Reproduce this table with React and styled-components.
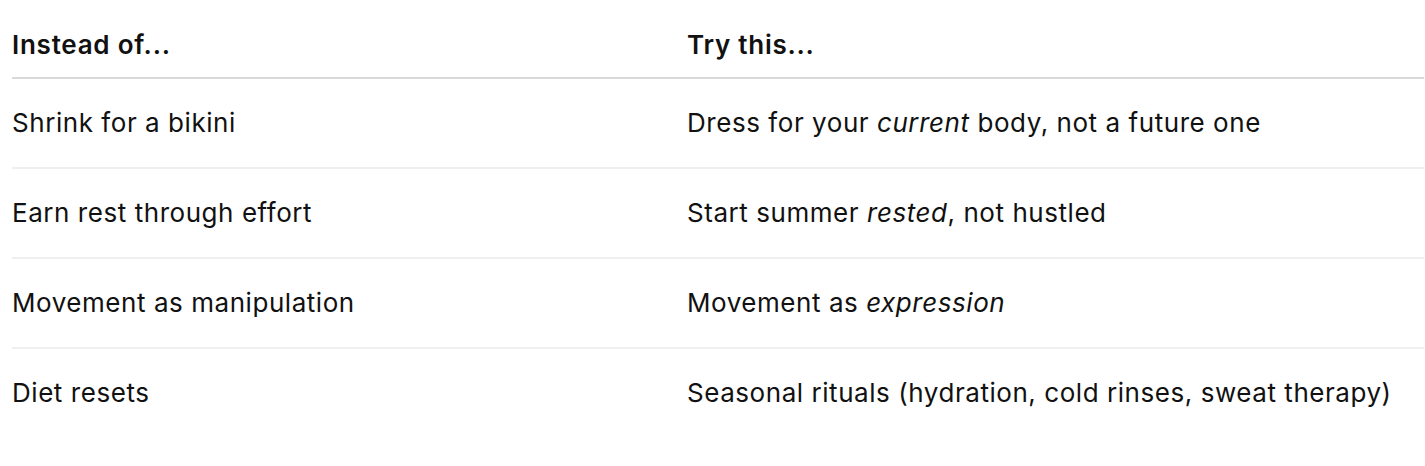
import React from "react";
import styled, { createGlobalStyle } from "styled-components";

const Global = createGlobalStyle`
  html, body { margin: 0; padding: 0; background: #ffffff; }
  body { font-family: Inter, "Noto Sans", sans-serif; color: #111111; }
`;

const Page = styled.div`
  padding: 0 1px 0 12px;
`;

const Table = styled.div`
  display: grid;
  grid-template-columns: 675px 1fr;
`;

const Row = styled.div`
  display: contents;
`;

const Cell = styled.div`
  font-size: 26px;
  line-height: 40px;
  font-weight: ${(p) => (p.$head ? 600 : 400)};
  letter-spacing: ${(p) => (p.$head ? "0.75px" : "0.55px")};
  padding: ${(p) => (p.$head ? "25px 0 12px" : "24px 0 24px")};
  border-bottom: ${(p) =>
    p.$head ? "2px solid #d9d9d9" : p.$last ? "none" : "2px solid #efefef"};
  white-space: nowrap;
`;

const rows = [
  ["Shrink for a bikini", <>Dress for your <em>current</em> body, not a future one</>],
  ["Earn rest through effort", <>Start summer <em>rested</em>, not hustled</>],
  ["Movement as manipulation", <>Movement as <em>expression</em></>],
  ["Diet resets", <>Seasonal rituals (hydration, cold rinses, sweat therapy)</>],
];

export default function App() {
  return (
    <Page>
      <Global />
      <Table>
        <Row>
          <Cell $head>Instead of...</Cell>
          <Cell $head>Try this...</Cell>
        </Row>
        {rows.map(([a, b], i) => (
          <Row key={i}>
            <Cell $last={i === rows.length - 1}>{a}</Cell>
            <Cell $last={i === rows.length - 1}>{b}</Cell>
          </Row>
        ))}
      </Table>
    </Page>
  );
}
